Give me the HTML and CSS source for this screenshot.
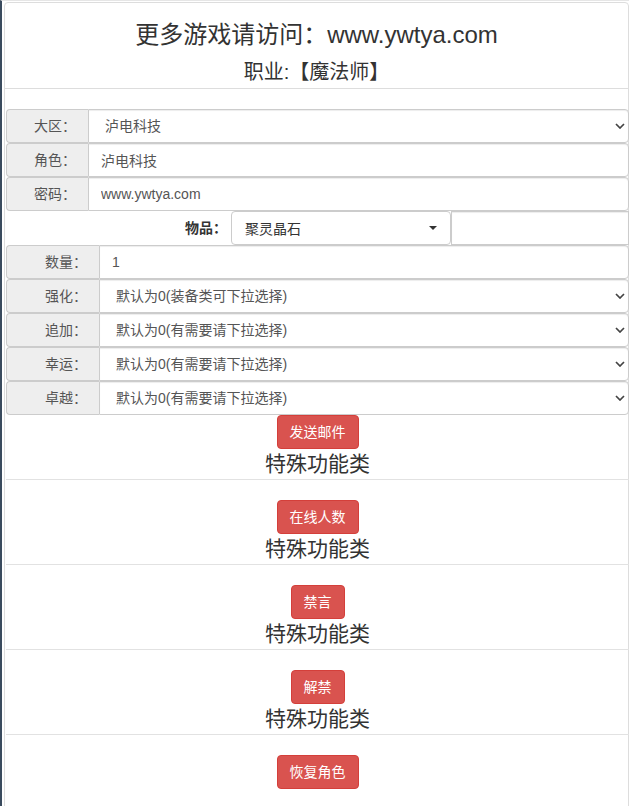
FILE: index.html
```html
<!DOCTYPE html>
<html lang="zh-CN">
<head>
<meta charset="utf-8">
<title>GM</title>
<link rel="stylesheet" href="styles.css">
</head>
<body>
<div class="panel">
  <div class="panel-heading">
    <h3 class="title">更多游戏请访问：www.ywtya.com</h3>
    <h4 class="subtitle">职业:【魔法师】</h4>
  </div>
  <div class="panel-body">
    <div class="row">
      <span class="addon">大区：</span>
      <select class="control select"><option>泸电科技</option></select>
    </div>
    <div class="row">
      <span class="addon">角色：</span>
      <input class="control" type="text" value="泸电科技">
    </div>
    <div class="row">
      <span class="addon">密码：</span>
      <input class="control" type="text" value="www.ywtya.com">
    </div>
    <div class="item-row">
      <label class="item-label">物品：</label>
      <button class="dropdown" type="button"><span>聚灵晶石</span><span class="caret"></span></button>
      <input class="item-extra" type="text">
    </div>
    <div class="row">
      <span class="addon addon-wide">数量：</span>
      <input class="control" type="text" value="1">
    </div>
    <div class="row">
      <span class="addon addon-wide">强化：</span>
      <select class="control select"><option>默认为0(装备类可下拉选择)</option></select>
    </div>
    <div class="row">
      <span class="addon addon-wide">追加：</span>
      <select class="control select"><option>默认为0(有需要请下拉选择)</option></select>
    </div>
    <div class="row">
      <span class="addon addon-wide">幸运：</span>
      <select class="control select"><option>默认为0(有需要请下拉选择)</option></select>
    </div>
    <div class="row">
      <span class="addon addon-wide">卓越：</span>
      <select class="control select"><option>默认为0(有需要请下拉选择)</option></select>
    </div>

    <div class="action">
      <button class="btn" type="button">发送邮件</button>
      <div class="section-title">特殊功能类</div>
    </div>
    <hr class="divider">
    <div class="action">
      <button class="btn" type="button">在线人数</button>
      <div class="section-title">特殊功能类</div>
    </div>
    <hr class="divider">
    <div class="action">
      <button class="btn" type="button">禁言</button>
      <div class="section-title">特殊功能类</div>
    </div>
    <hr class="divider">
    <div class="action">
      <button class="btn" type="button">解禁</button>
      <div class="section-title">特殊功能类</div>
    </div>
    <hr class="divider">
    <div class="action">
      <button class="btn" type="button">恢复角色</button>
    </div>
  </div>
</div>
</body>
</html>
```
FILE: styles.css
```css
html {
  background: #fff;
}

body {
  margin: 0;
  min-height: 100vh;
  box-sizing: border-box;
  padding: 1px 0 0 2px;
  border-top: 1px solid #e6e6e6;
  border-left: 2px solid #3a4b5e;
  font-family: "Liberation Sans", "Noto Sans CJK SC", sans-serif;
  font-size: 14px;
  color: #333;
  background: #fff;
  overflow: hidden;
}

.panel {
  border: 1px solid #ddd;
  border-radius: 4px;
  background: #fff;
  padding-bottom: 40px;
}

.panel-heading {
  padding: 14px 15px 2px;
  border-bottom: 1px solid #ddd;
  text-align: center;
}

.title {
  margin: 0;
  font-size: 24px;
  line-height: 36px;
  font-weight: normal;
  color: #333;
}

.subtitle {
  margin: 5px 0 0;
  font-size: 20px;
  line-height: 28px;
  font-weight: normal;
  color: #333;
}

.panel-body {
  padding: 20px 0 0 1px;
  margin-right: -1px;
}

.row {
  display: flex;
  height: 34px;
}

.addon {
  box-sizing: border-box;
  flex: 0 0 82px;
  height: 34px;
  padding-right: 12px;
  text-align: right;
  line-height: 32px;
  color: #555;
  background: #eee;
  border: 1px solid #ccc;
  border-right: 0;
  border-radius: 4px 0 0 4px;
}

.addon-wide {
  flex-basis: 93px;
}

.control {
  flex: 1;
  min-width: 0;
  box-sizing: border-box;
  height: 34px;
  margin: 0;
  padding: 0 12px;
  border: 1px solid #ccc;
  border-radius: 0 4px 4px 0;
  font: inherit;
  color: #555;
  background-color: #fff;
  box-shadow: inset 0 1px 1px rgba(0, 0, 0, 0.075);
  outline: none;
}

.select {
  appearance: none;
  -webkit-appearance: none;
  padding-left: 16px;
  padding-right: 30px;
  background-image: url("data:image/svg+xml,%3Csvg xmlns='http://www.w3.org/2000/svg' width='10' height='6' viewBox='0 0 10 6'%3E%3Cpath d='M1 1l4 4 4-4' fill='none' stroke='%23444' stroke-width='1.7'/%3E%3C/svg%3E");
  background-repeat: no-repeat;
  background-position: right 3px center;
  background-size: 10px 6px;
}

.item-row {
  display: flex;
  height: 34px;
}

.item-label {
  box-sizing: border-box;
  flex: 0 0 221px;
  margin-right: 4px;
  text-align: right;
  line-height: 34px;
  font-weight: bold;
  color: #333;
}

.dropdown {
  box-sizing: border-box;
  flex: 0 0 220px;
  height: 34px;
  margin: 0;
  padding: 0 13px 0 13px;
  display: flex;
  align-items: center;
  justify-content: space-between;
  border: 1px solid #ccc;
  border-radius: 4px;
  background: #fff;
  font: inherit;
  color: #333;
}

.caret {
  width: 0;
  height: 0;
  border-top: 4px solid #333;
  border-left: 4px solid transparent;
  border-right: 4px solid transparent;
}

.item-extra {
  flex: 1;
  min-width: 0;
  box-sizing: border-box;
  height: 34px;
  margin: 0;
  border: 1px solid #ccc;
  border-radius: 0;
  background: #fff;
  box-shadow: inset 0 1px 1px rgba(0, 0, 0, 0.075);
  outline: none;
}

.action {
  display: flex;
  flex-direction: column;
  align-items: center;
}

.btn {
  box-sizing: border-box;
  height: 34px;
  margin: 0;
  padding: 6px 12px;
  font: inherit;
  font-size: 14px;
  line-height: 20px;
  color: #fff;
  background: #d9534f;
  border: 1px solid #d43f3a;
  border-radius: 4px;
}

.section-title {
  font-size: 21px;
  line-height: 30px;
  color: #333;
}

.divider {
  margin: 0 0 20px;
  border: 0;
  border-top: 1px solid #e2e2e2;
  height: 0;
}
```
